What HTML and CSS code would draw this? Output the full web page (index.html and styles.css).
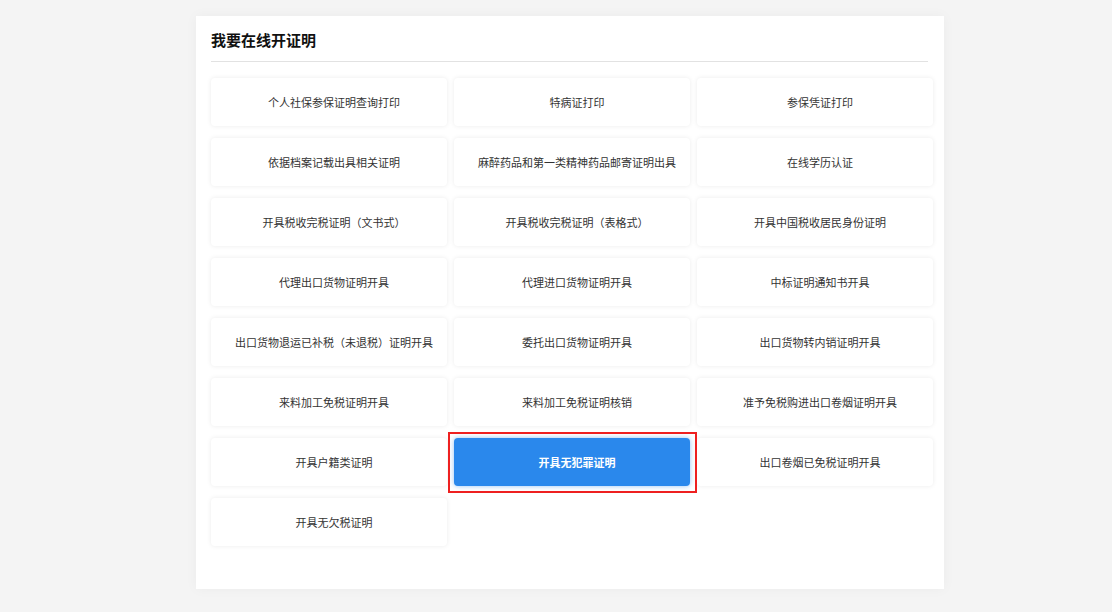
FILE: index.html
```html
<!DOCTYPE html>
<html lang="zh-CN">
<head>
	<meta charset="UTF-8">
	<title>我要在线开证明</title>
	<link rel="stylesheet" href="styles.css">
</head>
<body>
	<div class="panel">
		<div class="panel-title">我要在线开证明</div>
		<div class="cert-list">
			<div class="cert-item">个人社保参保证明查询打印</div>
			<div class="cert-item">特病证打印</div>
			<div class="cert-item">参保凭证打印</div>
			<div class="cert-item">依据档案记载出具相关证明</div>
			<div class="cert-item">麻醉药品和第一类精神药品邮寄证明出具</div>
			<div class="cert-item">在线学历认证</div>
			<div class="cert-item">开具税收完税证明（文书式）</div>
			<div class="cert-item">开具税收完税证明（表格式）</div>
			<div class="cert-item">开具中国税收居民身份证明</div>
			<div class="cert-item">代理出口货物证明开具</div>
			<div class="cert-item">代理进口货物证明开具</div>
			<div class="cert-item">中标证明通知书开具</div>
			<div class="cert-item">出口货物退运已补税（未退税）证明开具</div>
			<div class="cert-item">委托出口货物证明开具</div>
			<div class="cert-item">出口货物转内销证明开具</div>
			<div class="cert-item">来料加工免税证明开具</div>
			<div class="cert-item">来料加工免税证明核销</div>
			<div class="cert-item">准予免税购进出口卷烟证明开具</div>
			<div class="cert-item">开具户籍类证明</div>
			<div class="cert-item active">开具无犯罪证明</div>
			<div class="cert-item">出口卷烟已免税证明开具</div>
			<div class="cert-item">开具无欠税证明</div>
		</div>
	</div>
</body>
</html>
```

FILE: styles.css
```css
html {
	height: 100%;
}
body {
	margin: 0;
	height: 100%;
	background: #f4f4f4;
	font-family: "Noto Sans CJK SC", "Noto Sans", sans-serif;
	padding-top: 16px;
	box-sizing: border-box;
}
.panel {
	width: 748px;
	margin-left: 196px;
	background: #fff;
	box-sizing: border-box;
	padding: 14px 11px 43px 15px;
	box-shadow: 0 0 12px rgba(0, 0, 0, 0.04);
}
.panel-title {
	font-size: 15px;
	font-weight: bold;
	color: #111;
	line-height: 20px;
	padding-bottom: 11px;
	margin-right: 5px;
	border-bottom: 1px solid #e2e2e2;
}
.cert-list {
	display: grid;
	grid-template-columns: repeat(3, 236px);
	column-gap: 7px;
	row-gap: 12px;
	margin-top: 16px;
}
.cert-item {
	height: 48px;
	border-radius: 4px;
	background: #fff;
	box-shadow: 0 0 5px rgba(0, 0, 0, 0.08);
	display: flex;
	align-items: center;
	justify-content: center;
	padding-left: 10px;
	font-size: 11px;
	color: #333;
	white-space: nowrap;
}
.cert-item.active {
	position: relative;
	background: #2a88ec;
	color: #fff;
	font-weight: bold;
	box-shadow: 0 0 5px rgba(42, 136, 236, 0.5);
}
/* 选中框 */
.cert-item.active::after {
	content: "";
	position: absolute;
	top: -6px;
	left: -6px;
	right: -7px;
	bottom: -7px;
	border: 2px solid #ee2020;
}
```
